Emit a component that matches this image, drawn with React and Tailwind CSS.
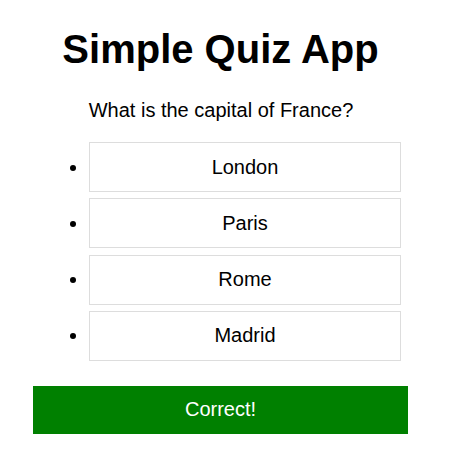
import React, { useState } from 'react'

const options = ['London', 'Paris', 'Rome', 'Madrid']

function App() {
  const [picked, setPicked] = useState('Paris')
  const correct = picked === 'Paris'

  return (
    <div className="min-h-[459px] bg-white text-black font-['Liberation_Sans',Arial,sans-serif]">
      <div className="ml-[33px] w-[375px] text-center">
        <h1 className="pt-[26px] text-[40px] leading-[46px] font-bold">Simple Quiz App</h1>
        <p className="mt-[27px] text-[20px] leading-[23px] pl-[1px]">What is the capital of France?</p>
        <ul className="mt-[20px] ml-[56px] w-[312px] list-disc">
          {options.map((opt) => (
            <li key={opt} className="mb-[6.33px] text-[20px]">
              <button
                onClick={() => setPicked(opt)}
                className="w-full h-[50px] flex items-center justify-center border border-[#dddddd] bg-white text-[20px] leading-[23px]"
              >
                {opt}
              </button>
            </li>
          ))}
        </ul>
        {picked && (
          <div
            className={`mt-[25px] h-[48px] flex items-center justify-center text-white text-[20px] leading-[23px] ${
              correct ? 'bg-[#008000]' : 'bg-[#cc0000]'
            }`}
          >
            {correct ? 'Correct!' : 'Wrong!'}
          </div>
        )}
      </div>
    </div>
  )
}

export default App
